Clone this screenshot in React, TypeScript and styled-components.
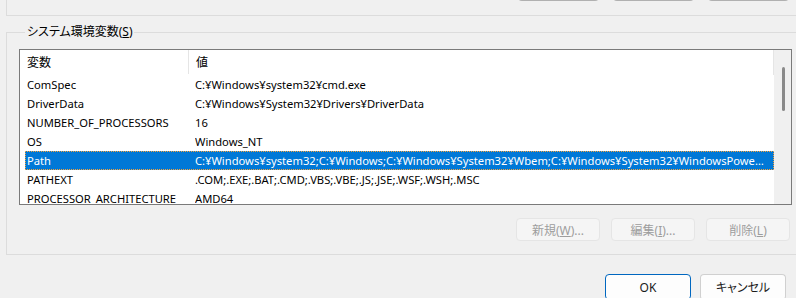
import React from 'react';
import styled, { createGlobalStyle } from 'styled-components';

const GlobalStyle = createGlobalStyle`
  html, body {
    margin: 0;
    padding: 0;
    background: #f0f0f0;
  }
  body {
    font-family: 'Noto Sans', 'Noto Sans CJK JP', sans-serif;
    font-size: 12px;
    font-feature-settings: 'palt';
    color: #000;
  }
`;

interface EnvVar {
  name: string;
  value: string;
}

const systemVars: EnvVar[] = [
  { name: 'ComSpec', value: 'C:¥Windows¥system32¥cmd.exe' },
  { name: 'DriverData', value: 'C:¥Windows¥System32¥Drivers¥DriverData' },
  { name: 'NUMBER_OF_PROCESSORS', value: '16' },
  { name: 'OS', value: 'Windows_NT' },
  {
    name: 'Path',
    value:
      'C:¥Windows¥system32;C:¥Windows;C:¥Windows¥System32¥Wbem;C:¥Windows¥System32¥WindowsPowerShell¥v1.0¥;C:¥Windows¥System32¥OpenSSH¥',
  },
  { name: 'PATHEXT', value: '.COM;.EXE;.BAT;.CMD;.VBS;.VBE;.JS;.JSE;.WSF;.WSH;.MSC' },
  { name: 'PROCESSOR_ARCHITECTURE', value: 'AMD64' },
];

const SELECTED = 'Path';

const App = () => {
  return (
    <Window>
      <GlobalStyle />
      <UserGroup>
        <PeekRow>
          <PeekButton />
          <PeekButton />
          <PeekButton />
        </PeekRow>
      </UserGroup>

      <SystemGroup>
        <Legend>
          システム環境変数(<u>S</u>)
        </Legend>
        <GroupBody>
          <ListView>
            <TableArea>
              <HeaderRow>
                <HeaderCell $width={168}>変数</HeaderCell>
                <HeaderDivider />
                <HeaderCell>値</HeaderCell>
              </HeaderRow>
              {systemVars.map((v) => (
                <Row key={v.name} $selected={v.name === SELECTED}>
                  <NameCell>{v.name}</NameCell>
                  <ValueCell>{v.value}</ValueCell>
                </Row>
              ))}
            </TableArea>
            <ScrollTrack>
              <ScrollThumb />
            </ScrollTrack>
          </ListView>
          <ActionRow>
            <DialogButton disabled>
              新規(<u>W</u>)...
            </DialogButton>
            <DialogButton disabled>
              編集(<u>I</u>)...
            </DialogButton>
            <DialogButton disabled>
              削除(<u>L</u>)
            </DialogButton>
          </ActionRow>
        </GroupBody>
      </SystemGroup>

      <FooterRow>
        <DialogButton $primary>OK</DialogButton>
        <DialogButton>キャンセル</DialogButton>
      </FooterRow>
    </Window>
  );
};

export default App;

const Window = styled.div`
  width: 796px;
  height: 298px;
  overflow: hidden;
  background: #f0f0f0;
`;

const UserGroup = styled.div`
  margin-left: 6px;
  width: 820px;
  height: 15px;
  border-left: 1px solid #dcdcdc;
  border-bottom: 1px solid #dcdcdc;
`;

const PeekRow = styled.div`
  display: flex;
  gap: 14px;
  padding-left: 511px;
`;

const PeekButton = styled.div`
  width: 81px;
  height: 24px;
  box-sizing: border-box;
  margin-top: -23px;
  background: #fdfdfd;
  border: 1px solid #d0d0d0;
  border-bottom: 2px solid #b0b0b0;
  border-radius: 4px;
`;

const SystemGroup = styled.fieldset`
  margin: 8px 0 0 6px;
  padding: 9px 0 13px 12px;
  width: 820px;
  box-sizing: border-box;
  border: 1px solid #dcdcdc;
  border-right: none;
  min-inline-size: 0;
`;

const Legend = styled.legend`
  padding: 0 2px;
  margin-left: 6px;
  font-size: 12px;
  line-height: 16px;
  color: #000;
`;

const GroupBody = styled.div`
  width: 773px;
  display: flex;
  flex-direction: column;
`;

const ListView = styled.div`
  height: 156px;
  box-sizing: border-box;
  border: 1px solid #7a7a7a;
  background: #fff;
  display: flex;
  overflow: hidden;
`;

const TableArea = styled.div`
  flex: 1;
  min-width: 0;
  display: flex;
  flex-direction: column;
`;

const HeaderRow = styled.div`
  display: flex;
  align-items: center;
  height: 25px;
  flex-shrink: 0;
  border-right: 1px solid #e5e5e5;
`;

const HeaderCell = styled.div<{ $width?: number }>`
  ${(p) => (p.$width ? `width: ${p.$width}px;` : 'flex: 1;')}
  padding-left: 7px;
  box-sizing: border-box;
  line-height: 25px;
`;

const HeaderDivider = styled.div`
  width: 1px;
  height: 24px;
  background: #e5e5e5;
  align-self: flex-start;
`;

const Row = styled.div<{ $selected?: boolean }>`
  display: flex;
  align-items: center;
  height: 19px;
  flex-shrink: 0;
  margin-left: 5px;
  box-sizing: border-box;
  font-size: 11.2px;
  background: ${(p) => (p.$selected ? '#0078d7' : 'transparent')};
  color: ${(p) => (p.$selected ? '#fff' : '#000')};
  border: 1px dotted ${(p) => (p.$selected ? '#f7a23a' : 'transparent')};
`;

const NameCell = styled.div`
  width: 169px;
  flex-shrink: 0;
  padding-left: 1px;
  box-sizing: border-box;
  white-space: nowrap;
  overflow: hidden;
`;

const ValueCell = styled.div`
  flex: 1;
  min-width: 0;
  padding-right: 8px;
  white-space: nowrap;
  overflow: hidden;
  text-overflow: ellipsis;
`;

const ScrollTrack = styled.div`
  width: 17px;
  flex-shrink: 0;
  background: #f0f0f0;
  display: flex;
  justify-content: center;
`;

const ScrollThumb = styled.div`
  width: 3px;
  height: 44px;
  margin-top: 17px;
  margin-left: 1px;
  background: #8a8a8a;
  border-radius: 2px;
`;

const ActionRow = styled.div`
  display: flex;
  justify-content: flex-end;
  gap: 11px;
  padding-right: 2px;
  margin-top: 13px;
`;

const DialogButton = styled.button<{ $primary?: boolean }>`
  width: 84px;
  height: 23px;
  box-sizing: border-box;
  padding: 0;
  font-family: 'Noto Sans', 'Noto Sans CJK JP', sans-serif;
  font-size: 12px;
  font-feature-settings: 'palt';
  border-radius: 4px;
  background: #fdfdfd;
  color: #1a1a1a;
  border: 1px solid ${(p) => (p.$primary ? '#0067c0' : '#d0d0d0')};
  border-bottom-color: ${(p) => (p.$primary ? '#0067c0' : '#b0b0b0')};

  &:disabled {
    background: #f5f5f5;
    color: #9d9d9d;
    border-color: #e5e5e5;
  }
`;

const FooterRow = styled.div`
  display: flex;
  justify-content: flex-end;
  gap: 9px;
  padding-right: 10px;
  margin-top: 19px;

  & > button {
    width: 86px;
    height: 26px;
  }
`;
